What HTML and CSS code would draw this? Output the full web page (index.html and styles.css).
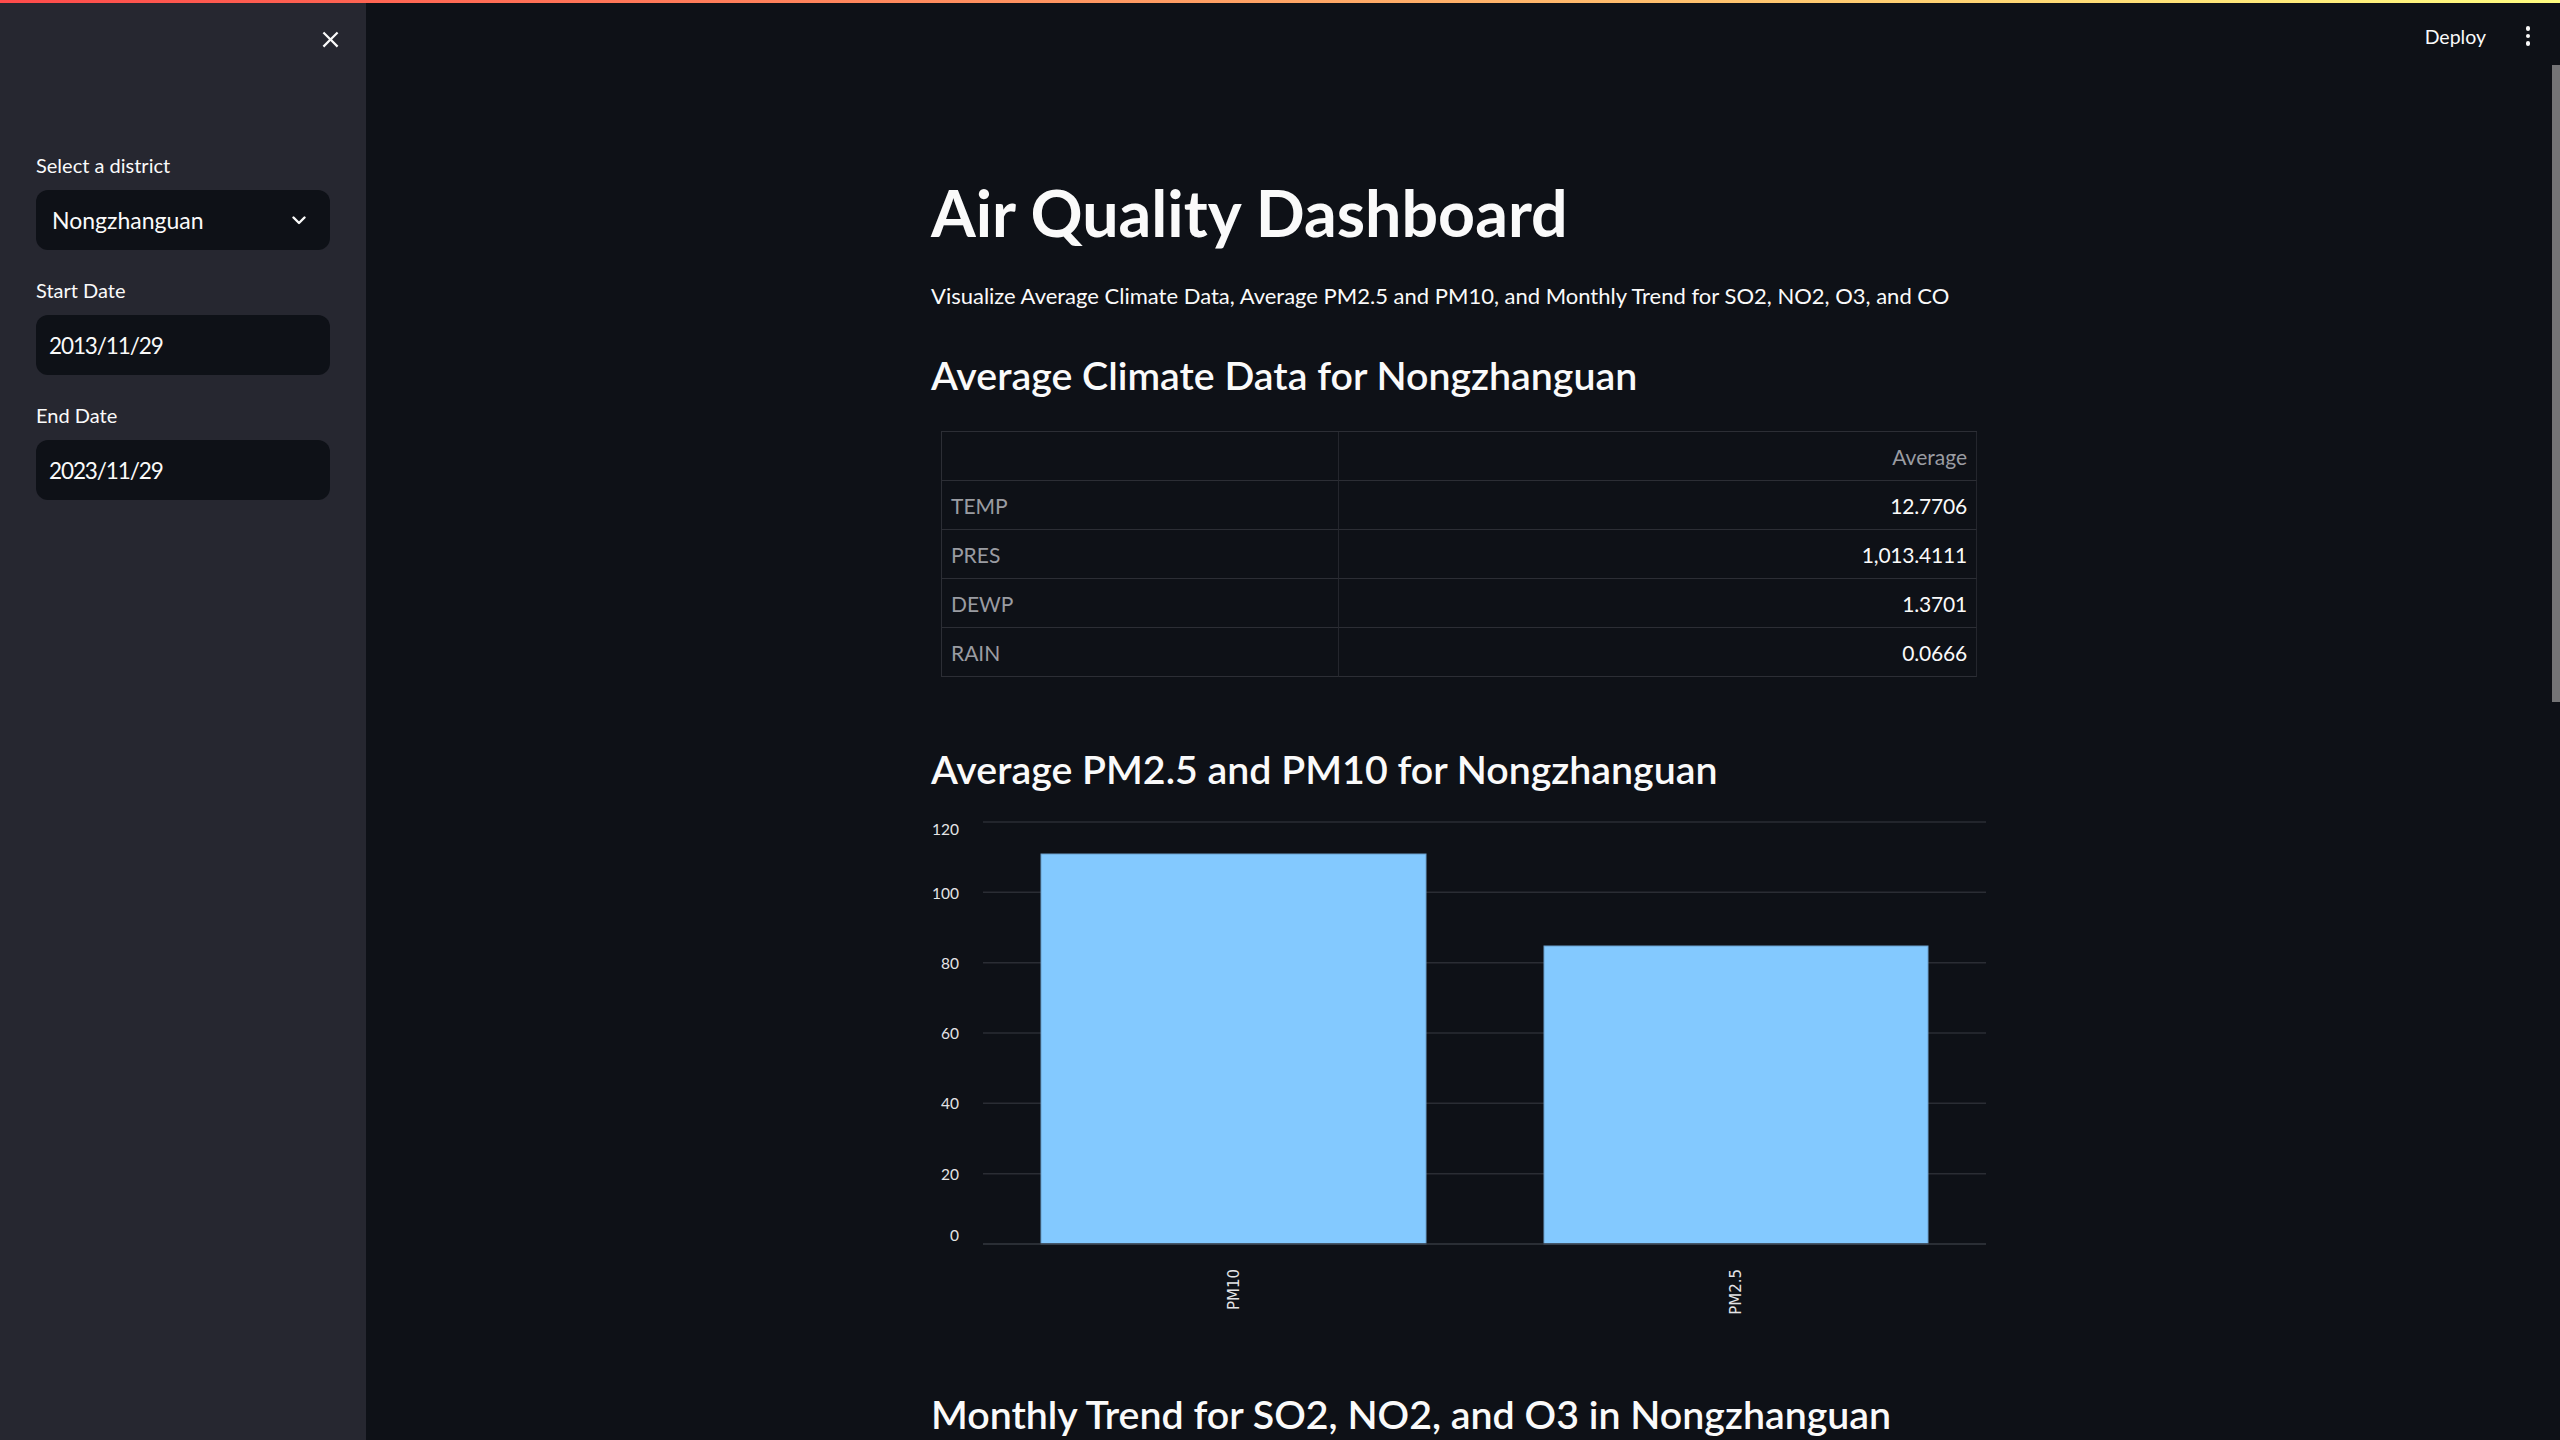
FILE: index.html
```html
<!DOCTYPE html>
<html lang="en">
<head>
<meta charset="utf-8">
<title>Air Quality Dashboard</title>
<link rel="stylesheet" href="styles.css">
</head>
<body>
<div class="decoration"></div>
<div class="app">
  <aside class="sidebar">
    <div class="sidebar-header">
      <button class="close-btn" aria-label="Close sidebar">
        <svg width="27" height="27" viewBox="0 0 24 24"><path fill="#fafafa" d="M19 6.41L17.59 5 12 10.59 6.41 5 5 6.41 10.59 12 5 17.59 6.41 19 12 13.41 17.59 19 19 17.59 13.41 12z"/></svg>
      </button>
    </div>
    <div class="widgets">
      <div class="widget">
        <label class="wlabel">Select a district</label>
        <div class="box select">
          <span class="select-value">Nongzhanguan</span>
          <svg class="chev" width="14" height="9" viewBox="0 0 14 9"><polyline points="1.5,1.5 7,7 12.5,1.5" fill="none" stroke="#fafafa" stroke-width="2.4" stroke-linecap="round" stroke-linejoin="round"/></svg>
        </div>
      </div>
      <div class="widget">
        <label class="wlabel">Start Date</label>
        <div class="box date">2013/11/29</div>
      </div>
      <div class="widget">
        <label class="wlabel">End Date</label>
        <div class="box date">2023/11/29</div>
      </div>
    </div>
  </aside>
  <main class="main">
    <header class="topbar">
      <span class="deploy">Deploy</span>
      <span class="menu" aria-label="Main menu"><i></i><i></i><i></i></span>
    </header>
    <section class="block">
      <h1 class="title">Air Quality Dashboard</h1>
      <p class="subtitle">Visualize Average Climate Data, Average PM2.5 and PM10, and Monthly Trend for SO2, NO2, O3, and CO</p>
      <h3 class="sub h-climate">Average Climate Data for Nongzhanguan</h3>
      <div class="df">
        <div class="cell idx"></div><div class="cell head">Average</div>
        <div class="cell idx">TEMP</div><div class="cell val">12.7706</div>
        <div class="cell idx">PRES</div><div class="cell val">1,013.4111</div>
        <div class="cell idx">DEWP</div><div class="cell val">1.3701</div>
        <div class="cell idx">RAIN</div><div class="cell val">0.0666</div>
      </div>
      <h3 class="sub h-pm">Average PM2.5 and PM10 for Nongzhanguan</h3>
      <svg class="chart" width="1056" height="520" viewBox="0 0 1056 520">
        <g class="grid">
          <line x1="52" x2="1055" y1="21" y2="21"/>
          <line x1="52" x2="1055" y1="91.33" y2="91.33"/>
          <line x1="52" x2="1055" y1="161.67" y2="161.67"/>
          <line x1="52" x2="1055" y1="232" y2="232"/>
          <line x1="52" x2="1055" y1="302.33" y2="302.33"/>
          <line x1="52" x2="1055" y1="372.67" y2="372.67"/>
        </g>
        <rect class="bar" x="110" y="53" width="385" height="390"/>
        <rect class="bar" x="613" y="145" width="384" height="298"/>
        <line class="domain" x1="52" x2="1055" y1="443" y2="443"/>
        <g class="ylab">
          <text x="28" y="34">120</text>
          <text x="28" y="97.5">100</text>
          <text x="28" y="167.5">80</text>
          <text x="28" y="238">60</text>
          <text x="28" y="308">40</text>
          <text x="28" y="378.5">20</text>
          <text x="28" y="440">0</text>
        </g>
        <g class="xlab">
          <text transform="translate(302.5,468) rotate(-90)">PM10</text>
          <text transform="translate(805,468) rotate(-90)">PM2.5</text>
        </g>
      </svg>
      <h3 class="sub h-trend">Monthly Trend for SO2, NO2, and O3 in Nongzhanguan</h3>
    </section>
    <div class="scroll-thumb"></div>
  </main>
</div>
</body>
</html>
```

FILE: styles.css
```css
* { box-sizing: border-box; }
html, body {
  margin: 0;
  padding: 0;
  width: 2560px;
  height: 1440px;
  overflow: hidden;
  background: #0e1117;
  color: #fafafa;
  font-family: "Lato", "Noto Sans", sans-serif;
}
.decoration {
  position: absolute;
  top: 0; left: 0; right: 0;
  height: 3px;
  background: linear-gradient(90deg, #ff4b4b, #fffd80);
  z-index: 10;
}
.app {
  display: flex;
  height: 1440px;
}
.sidebar {
  width: 366px;
  flex: 0 0 366px;
  background: #262730;
  display: flex;
  flex-direction: column;
}
.sidebar-header {
  height: 78px;
  display: flex;
  align-items: center;
  justify-content: flex-end;
  padding-right: 22px;
}
.close-btn {
  background: none;
  border: 0;
  padding: 0;
  width: 27px;
  height: 27px;
  display: flex;
}
.widgets {
  margin-top: 71px;
  padding: 0 36px;
  display: flex;
  flex-direction: column;
  gap: 24px;
}
.widget {
  display: flex;
  flex-direction: column;
}
.wlabel {
  font-size: 20px;
  line-height: 32px;
  height: 32px;
  margin-bottom: 9px;
  color: #fafafa;
}
.box {
  height: 60px;
  background: #0e1117;
  border-radius: 12px;
  display: flex;
  align-items: center;
  font-size: 23px;
  color: #fafafa;
}
.select {
  padding: 0 24px 0 16px;
  justify-content: space-between;
}
.chev { display: block; }
.date {
  padding-left: 13px;
  font-size: 22.5px;
  letter-spacing: -1.1px;
}
.main {
  flex: 1;
  position: relative;
  padding-right: 8px;
  display: flex;
  flex-direction: column;
}
.topbar {
  height: 69px;
  padding-top: 5px;
  display: flex;
  align-items: center;
  justify-content: flex-end;
  padding-right: 12px;
  gap: 30px;
}
.deploy {
  font-size: 19.5px;
  color: #fafafa;
}
.menu {
  width: 24px;
  height: 24px;
  display: flex;
  flex-direction: column;
  align-items: center;
  justify-content: center;
  gap: 3px;
}
.menu i {
  width: 4.5px;
  height: 4.5px;
  border-radius: 50%;
  background: #fafafa;
  display: block;
}
.block {
  width: 1056px;
  margin: 0 auto;
  padding-top: 104.5px;
}
.title {
  margin: 0;
  font-size: 64.5px;
  line-height: 80px;
  font-weight: 700;
}
.subtitle {
  margin: 26px 0 0;
  font-size: 22px;
  line-height: 36px;
}
.sub {
  margin: 0;
  font-size: 39.3px;
  line-height: 52px;
  font-weight: 600;
}
.h-climate { margin-top: 35.1px; }
.df {
  margin: 30px 10px 0;
  display: grid;
  grid-template-columns: 397px 1fr;
  border-top: 1px solid #2c2e35;
  border-left: 1px solid #2c2e35;
  font-size: 21px;
}
.cell {
  height: 49px;
  border-right: 1px solid #24262d;
  border-bottom: 1px solid #2c2e35;
  display: flex;
  align-items: center;
  padding: 0 9px;
}
.cell.idx { color: #9a9ca2; }
.cell.head { color: #9a9ca2; justify-content: flex-end; }
.cell.val { color: #fafafa; justify-content: flex-end; letter-spacing: -0.2px; }
.h-pm { margin-top: 65.5px; }
.chart {
  display: block;
  margin-top: 6.5px;
}
.grid line { stroke: #2a2d34; stroke-width: 1.5; }
.domain { stroke: #353840; stroke-width: 1.5; }
.bar { fill: #83c9ff; stroke: #6a9fcc; stroke-width: 1; }
.ylab text {
  font-family: "Lato", sans-serif;
  font-size: 15.5px;
  fill: #e4e4e6;
  text-anchor: end;
}
.xlab text {
  font-family: "DejaVu Sans", sans-serif;
  font-size: 15px;
  fill: #e4e4e6;
  text-anchor: end;
  dominant-baseline: central;
}
.h-trend { margin-top: 67px; }
.scroll-thumb {
  position: absolute;
  right: 0;
  top: 65px;
  width: 8px;
  height: 637px;
  background: #747476;
}
```
